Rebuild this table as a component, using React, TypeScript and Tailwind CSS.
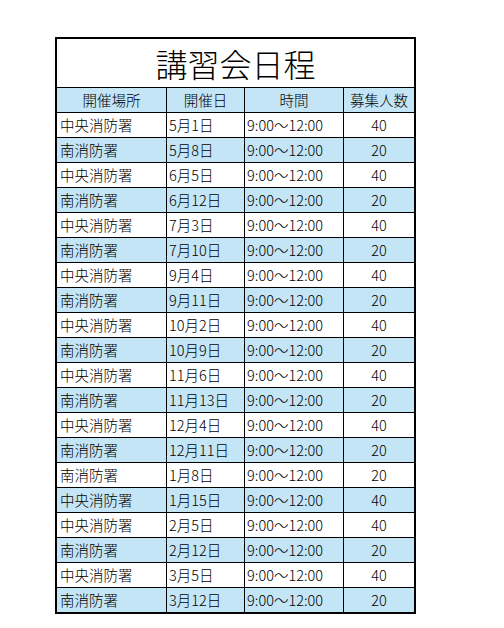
import React from "react";

type Row = { place: string; date: string; time: string; count: number };

const rows: Row[] = [
  { place: "中央消防署", date: "5月1日", time: "9:00～12:00", count: 40 },
  { place: "南消防署", date: "5月8日", time: "9:00～12:00", count: 20 },
  { place: "中央消防署", date: "6月5日", time: "9:00～12:00", count: 40 },
  { place: "南消防署", date: "6月12日", time: "9:00～12:00", count: 20 },
  { place: "中央消防署", date: "7月3日", time: "9:00～12:00", count: 40 },
  { place: "南消防署", date: "7月10日", time: "9:00～12:00", count: 20 },
  { place: "中央消防署", date: "9月4日", time: "9:00～12:00", count: 40 },
  { place: "南消防署", date: "9月11日", time: "9:00～12:00", count: 20 },
  { place: "中央消防署", date: "10月2日", time: "9:00～12:00", count: 40 },
  { place: "南消防署", date: "10月9日", time: "9:00～12:00", count: 20 },
  { place: "中央消防署", date: "11月6日", time: "9:00～12:00", count: 40 },
  { place: "南消防署", date: "11月13日", time: "9:00～12:00", count: 20 },
  { place: "中央消防署", date: "12月4日", time: "9:00～12:00", count: 40 },
  { place: "南消防署", date: "12月11日", time: "9:00～12:00", count: 20 },
  { place: "南消防署", date: "1月8日", time: "9:00～12:00", count: 20 },
  { place: "中央消防署", date: "1月15日", time: "9:00～12:00", count: 40 },
  { place: "中央消防署", date: "2月5日", time: "9:00～12:00", count: 40 },
  { place: "南消防署", date: "2月12日", time: "9:00～12:00", count: 20 },
  { place: "中央消防署", date: "3月5日", time: "9:00～12:00", count: 40 },
  { place: "南消防署", date: "3月12日", time: "9:00～12:00", count: 20 },
];

const headers = ["開催場所", "開催日", "時間", "募集人数"];

const App = () => {
  return (
    <div
      className="w-[504px] h-[628px] bg-white pt-[37px] pl-[55px] text-black font-light"
      style={{ fontFamily: '"Noto Sans CJK JP", "Noto Sans", sans-serif' }}
    >
      <div className="w-[361px] border-2 border-black bg-black grid grid-cols-[109px_77px_98px_70px] gap-px">
        <div className="col-span-4 h-[48px] bg-white flex items-center justify-center text-[32px] leading-none font-light">
          講習会日程
        </div>
        {headers.map((h) => (
          <div
            key={h}
            className="h-[24px] bg-[#c4e5f5] flex items-center justify-center text-[14.5px] leading-none"
          >
            {h}
          </div>
        ))}
        {rows.map((r, i) => {
          const bg = i % 2 === 1 ? "bg-[#c4e5f5]" : "bg-white";
          return (
            <React.Fragment key={i}>
              <div className={`h-[24px] ${bg} flex items-center pl-[3px] text-[14.5px] leading-none`}>
                {r.place}
              </div>
              <div className={`h-[24px] ${bg} flex items-center pl-[2px] text-[14.5px] leading-none`}>
                {r.date}
              </div>
              <div className={`h-[24px] ${bg} flex items-center pl-[2px] text-[14.5px] leading-none`}>
                {r.time}
              </div>
              <div className={`h-[24px] ${bg} flex items-center justify-center text-[14.5px] leading-none`}>
                {r.count}
              </div>
            </React.Fragment>
          );
        })}
      </div>
    </div>
  );
};

export default App;
